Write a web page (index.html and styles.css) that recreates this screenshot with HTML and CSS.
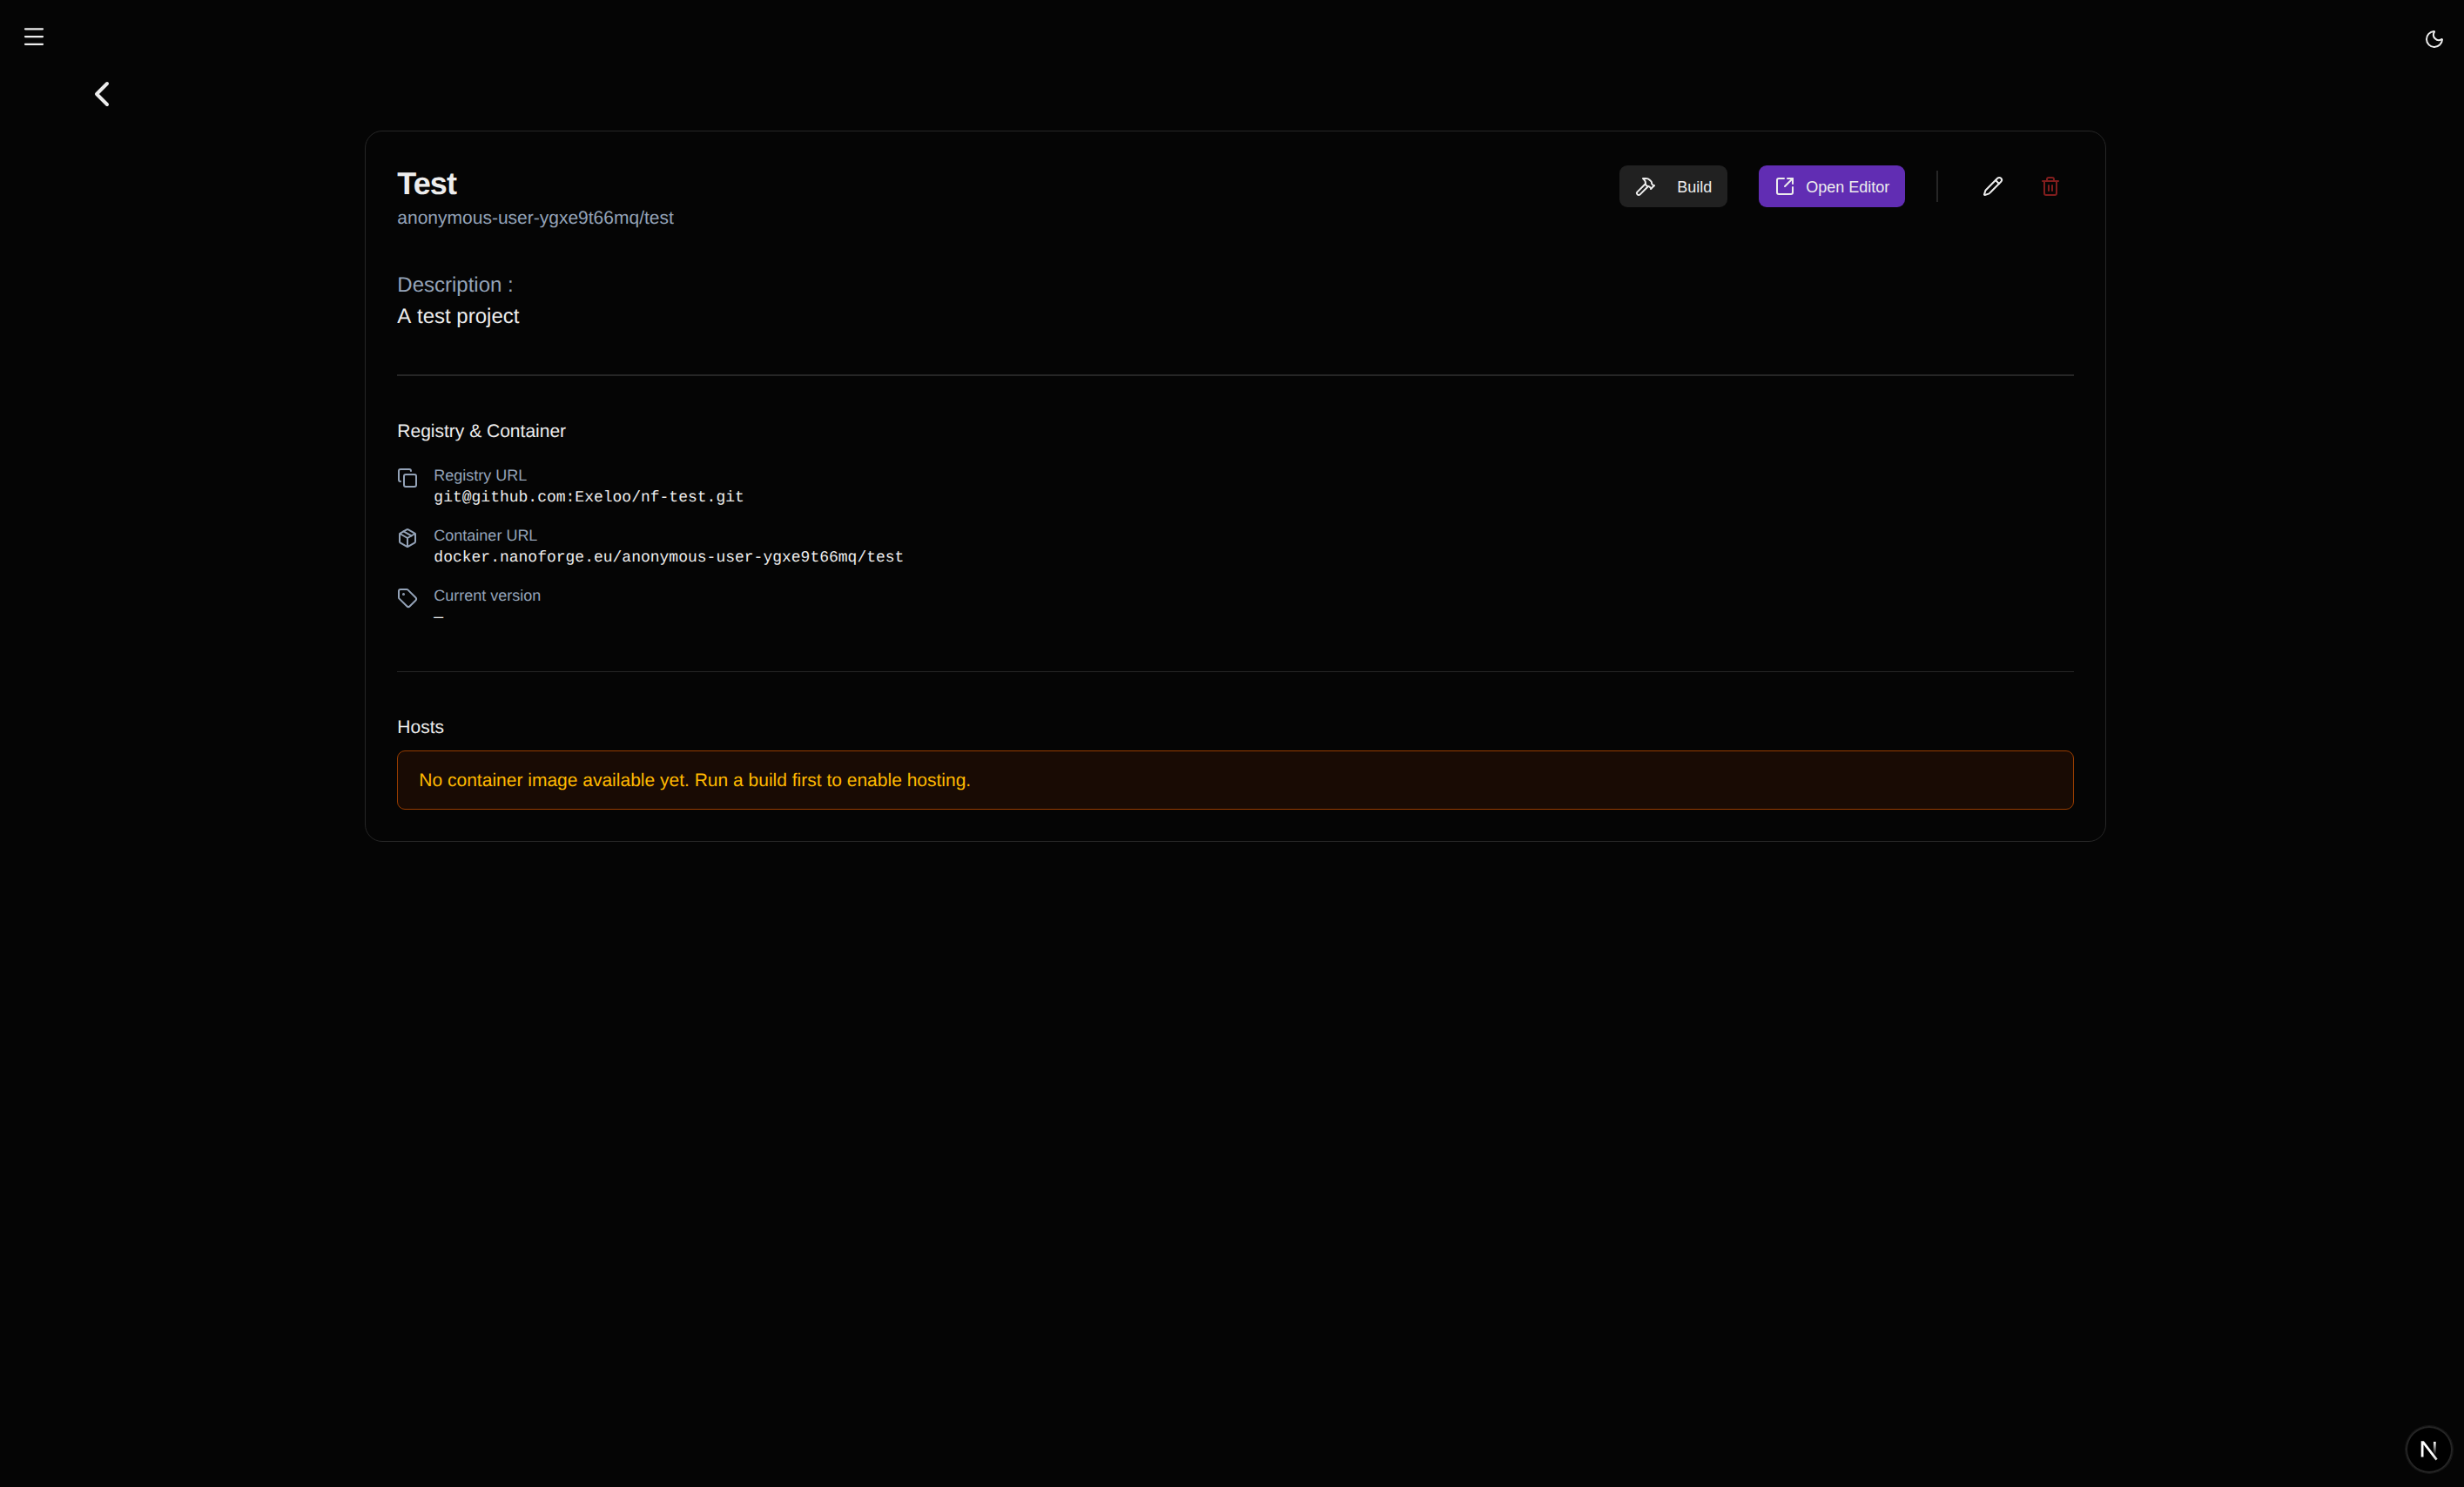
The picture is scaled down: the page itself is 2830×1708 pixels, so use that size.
FILE: index.html
```
<!DOCTYPE html>
<html lang="en">
<head>
  <meta charset="UTF-8">
  <meta name="viewport" content="width=device-width, initial-scale=1.0">
  <title>Test - NanoForge</title>
  <link rel="stylesheet" href="styles.css">
</head>
<body>
  <header class="topbar">
    <button class="menu-button" aria-label="Menu">
      <svg class="icon icon-menu" viewBox="0 0 24 24"><path d="M4 5h16M4 12h16M4 19h16"/></svg>
    </button>
    <button class="theme-button" aria-label="Theme">
      <svg class="icon" viewBox="0 0 24 24"><path d="M20.985 12.486a9 9 0 1 1-9.473-9.472c.405-.022.617.46.402.803a6 6 0 0 0 8.268 8.268c.344-.215.825-.004.803.401"/></svg>
    </button>
  </header>

  <a class="back" href="#" aria-label="Back">
    <svg class="icon icon-back" viewBox="0 0 24 24"><path d="m15 18-6-6 6-6"/></svg>
  </a>

  <main class="card">
    <div class="card-header">
      <div class="heading">
        <h1 class="title">Test</h1>
        <p class="subtitle">anonymous-user-ygxe9t66mq/test</p>
      </div>
      <div class="actions">
        <button class="button button-build">
          <svg class="icon" viewBox="0 0 24 24"><path d="m15 12-9.373 9.373a1 1 0 0 1-3.001-3L12 9"/><path d="m18 15 4-4"/><path d="m21.5 11.5-1.914-1.914A2 2 0 0 1 19 8.172v-.344a2 2 0 0 0-.586-1.414l-1.657-1.657A6 6 0 0 0 12.516 3H9l1.243 1.243A6 6 0 0 1 12 8.485V10l2 2h1.172a2 2 0 0 1 1.414.586L18.5 14.5"/></svg>
          <span class="button-text">Build</span>
        </button>
        <button class="button button-editor">
          <svg class="icon" viewBox="0 0 24 24"><path d="M21 13v6a2 2 0 0 1-2 2H5a2 2 0 0 1-2-2V5a2 2 0 0 1 2-2h6"/><path d="m21 3-9 9"/><path d="M15 3h6v6"/></svg>
          <span class="button-text">Open Editor</span>
        </button>
        <div class="actions-separator"></div>
        <div class="icon-buttons">
          <button class="icon-button" aria-label="Edit">
            <svg class="icon" viewBox="0 0 24 24"><path d="M21.174 6.812a1 1 0 0 0-3.986-3.987L3.842 16.174a2 2 0 0 0-.5.83l-1.321 4.352a.5.5 0 0 0 .623.622l4.353-1.32a2 2 0 0 0 .83-.497z"/><path d="m15 5 4 4"/></svg>
          </button>
          <button class="icon-button delete" aria-label="Delete">
            <svg class="icon" viewBox="0 0 24 24"><path d="M10 11v6M14 11v6"/><path d="M19 6v14a2 2 0 0 1-2 2H7a2 2 0 0 1-2-2V6"/><path d="M3 6h18"/><path d="M8 6V4a2 2 0 0 1 2-2h4a2 2 0 0 1 2 2v2"/></svg>
          </button>
        </div>
      </div>
    </div>

    <section class="description">
      <p class="description-label">Description :</p>
      <p>A test project</p>
    </section>

    <section class="registry">
      <h2 class="section-title">Registry &amp; Container</h2>
      <ul class="details">
        <li class="detail">
          <svg class="icon" viewBox="0 0 24 24"><rect width="14" height="14" x="8" y="8" rx="2"/><path d="M4 16c-1.1 0-2-.9-2-2V4c0-1.1.9-2 2-2h10c1.1 0 2 .9 2 2"/></svg>
          <div>
            <p class="detail-label">Registry URL</p>
            <p class="detail-value">git@github.com:Exeloo/nf-test.git</p>
          </div>
        </li>
        <li class="detail">
          <svg class="icon" viewBox="0 0 24 24"><path d="M11 21.73a2 2 0 0 0 2 0l7-4A2 2 0 0 0 21 16V8a2 2 0 0 0-1-1.73l-7-4a2 2 0 0 0-2 0l-7 4A2 2 0 0 0 3 8v8a2 2 0 0 0 1 1.73z"/><path d="M12 22V12"/><path d="M3.29 7 12 12l8.71-5"/><path d="m7.5 4.27 9 5.15"/></svg>
          <div>
            <p class="detail-label">Container URL</p>
            <p class="detail-value">docker.nanoforge.eu/anonymous-user-ygxe9t66mq/test</p>
          </div>
        </li>
        <li class="detail">
          <svg class="icon" viewBox="0 0 24 24"><path d="M12.586 2.586A2 2 0 0 0 11.172 2H4a2 2 0 0 0-2 2v7.172a2 2 0 0 0 .586 1.414l8.704 8.704a2.426 2.426 0 0 0 3.42 0l6.58-6.58a2.426 2.426 0 0 0 0-3.42z"/><circle class="dot" cx="7.5" cy="7.5" r=".5"/></svg>
          <div>
            <p class="detail-label">Current version</p>
            <p class="detail-value">—</p>
          </div>
        </li>
      </ul>
    </section>

    <section class="hosts">
      <h2 class="section-title">Hosts</h2>
      <div class="alert">No container image available yet. Run a build first to enable hosting.</div>
    </section>
  </main>

  <div class="dev-badge">
    <svg viewBox="0 0 36 36">
      <defs>
        <linearGradient id="diagonal" gradientUnits="userSpaceOnUse" x1="9.955" y1="11.13" x2="15.16" y2="17.96">
          <stop stop-color="#fff"/>
          <stop offset="0.6" stop-color="#fff" stop-opacity="0.8"/>
          <stop offset="1" stop-color="#fff" stop-opacity="0"/>
        </linearGradient>
        <linearGradient id="stem" gradientUnits="userSpaceOnUse" x1="11.8" y1="1.5" x2="11.8" y2="11.5">
          <stop stop-color="#fff"/>
          <stop offset="1" stop-color="#fff" stop-opacity="0"/>
        </linearGradient>
        <clipPath id="top-edge">
          <path d="M0 1h16v16H0z"/>
        </clipPath>
      </defs>
      <g transform="translate(10.4 10.5)" clip-path="url(#top-edge)">
        <path d="M13.3 15.2 2.34 1v12.1" fill="none" stroke="url(#diagonal)" stroke-width="1.86"/>
        <path d="M11.825 1.5v11.6" fill="none" stroke="url(#stem)" stroke-width="1.86"/>
      </g>
    </svg>
  </div>
</body>
</html>
```
FILE: styles.css
```
* {
  box-sizing: border-box;
}

html {
  font-size: 24px;
}

body {
  margin: 0;
  min-height: 100vh;
  background-color: #050505;
  color: #ededed;
  font-family: "Liberation Sans", Arial, sans-serif;
  line-height: 1.5;
  text-rendering: geometricPrecision;
}

h1,
h2,
p,
ul {
  margin: 0;
  padding: 0;
}

button {
  border: none;
  padding: 0;
  background: none;
  color: inherit;
  font-family: inherit;
  cursor: pointer;
}

.icon {
  display: block;
  flex-shrink: 0;
  width: 24px;
  height: 24px;
  fill: none;
  stroke: currentColor;
  stroke-width: 2;
  stroke-linecap: round;
  stroke-linejoin: round;
}

.topbar {
  display: flex;
  justify-content: space-between;
  height: 84px;
  padding: 27px 22px 0 24px;
}

.icon-menu {
  width: 30px;
  height: 30px;
  stroke-width: 1.8;
}

.theme-button {
  height: 24px;
  margin-top: 6px;
}

.menu-button {
  height: 30px;
}

.back {
  display: block;
  width: 48px;
  margin-left: 93px;
  color: inherit;
}

.icon-back {
  width: 48px;
  height: 48px;
}

.card {
  width: 2000px;
  margin: 18px 0 0 419.33px;
  padding: 36px;
  border: 1px solid #262626;
  border-radius: 20px;
}

.card-header {
  display: flex;
  justify-content: space-between;
  align-items: flex-start;
}

.title {
  font-size: 36px;
  line-height: 48px;
  letter-spacing: -0.025em;
}

.subtitle {
  padding-top: 1.4px;
  font-size: 21px;
  line-height: 30px;
  color: #94a3b8;
}

.actions {
  display: flex;
  align-items: center;
  gap: 36px;
}

.button {
  display: flex;
  align-items: center;
  height: 48px;
  padding: 0 18px;
  border-radius: 9px;
  font-size: 18px;
}

.button-text {
  padding-top: 2px;
}

.button-build {
  gap: 24px;
  background-color: #212121;
}

.button-editor {
  gap: 12px;
  background-color: #612db3;
}

.actions-separator {
  width: 2px;
  height: 36px;
  background-color: #262626;
}

.icon-buttons {
  display: flex;
  gap: 12px;
}

.icon-button {
  display: flex;
  align-items: center;
  justify-content: center;
  width: 54px;
  height: 54px;
}

.delete {
  color: #811d1d;
}

.description {
  margin-top: 43.6px;
  padding-bottom: 48px;
  border-bottom: 2px solid #262626;
  font-kerning: none;
}

.description-label {
  color: #94a3b8;
}

.registry {
  padding: 48px 0;
  border-bottom: 1px solid #262626;
}

.section-title {
  padding-top: 1px;
  font-size: 21px;
  font-weight: 400;
  line-height: 29px;
}

.details {
  display: flex;
  flex-direction: column;
  gap: 18px;
  margin-top: 24px;
  list-style: none;
}

.detail {
  display: flex;
  gap: 18px;
  font-size: 18px;
  line-height: 24px;
}

.detail .icon {
  margin-top: 3px;
  color: #94a3b8;
}

.detail .dot {
  fill: currentColor;
}

.detail-label {
  color: #94a3b8;
}

.detail-value {
  margin-top: 2px;
  padding-bottom: 1px;
  font-family: "Liberation Mono", monospace;
}

.hosts {
  padding-top: 48px;
}

.alert {
  margin-top: 12px;
  padding: 19px 24px 18px;
  border: 1px solid #973c00;
  border-radius: 9px;
  background-color: #190b04;
  color: #ffb900;
  font-size: 21px;
  line-height: 29px;
}

/* floats over the page */
.dev-badge {
  position: fixed;
  right: 13px;
  bottom: 16px;
  width: 54px;
  height: 54px;
  border-radius: 50%;
  background-color: #000;
  box-shadow: 0 0 0 1px #171717, inset 0 0 0 2px #252525;
}

.dev-badge svg {
  display: block;
  width: 54px;
  height: 54px;
}
```
